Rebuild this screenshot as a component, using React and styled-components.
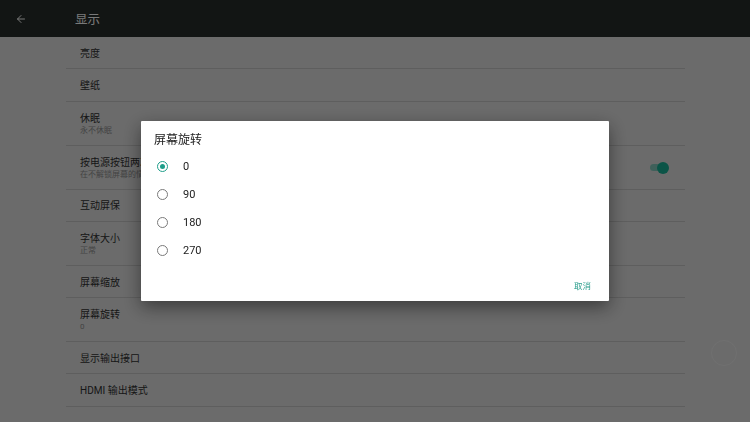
import React from 'react'
import styled, { createGlobalStyle } from 'styled-components';
import { ArrowLeft } from 'lucide-react';

const GlobalStyle = createGlobalStyle`
  html, body {
    margin: 0;
    padding: 0;
    background: #d6d6d6;
    font-family: Roboto, "Noto Sans CJK SC", sans-serif;
  }
`;

const Screen = styled.div`
  width: 750px;
  height: 422px;
  overflow: hidden;
  background: #d6d6d6;
`;

const Header = styled.div`
  height: 37px;
  display: flex;
  align-items: center;
  background: #242a28;
  color: #f2f2f2;
  padding-left: 15px;
  box-sizing: border-box;
`;

const HeaderTitle = styled.span`
  margin-left: 48px;
  font-size: 12.5px;
  font-family: "Noto Sans CJK SC", sans-serif;
`;

const List = styled.div`
  margin: 0 65px 0 66px;
`;

const Row = styled.div`
  height: ${p => (p.$sub ? 42 : 30.3)}px;
  border-bottom: 1px solid #bdbdbd;
  display: flex;
  align-items: center;
  justify-content: space-between;
  padding: 1px 17px 0 14px;
`;

const Texts = styled.div`
  display: flex;
  flex-direction: column;
  gap: 1px;
  font-family: Roboto, "Noto Sans CJK SC", sans-serif;
`;

const Title = styled.span`
  font-size: 10px;
  line-height: 13px;
  color: #2e2e2e;
`;

const Sub = styled.span`
  font-size: 8px;
  line-height: 10px;
  color: #888888;
`;

const Switch = styled.div`
  position: relative;
  width: 18px;
  height: 7px;
  border-radius: 4px;
  background: rgba(23, 168, 142, 0.45);
  &::after {
    content: '';
    position: absolute;
    right: -1px;
    top: -2.5px;
    width: 12px;
    height: 12px;
    border-radius: 50%;
    background: #17a88e;
  }
`;

const Overlay = styled.div`
  position: fixed;
  inset: 0;
  background: rgba(0, 0, 0, 0.5);
  display: flex;
  align-items: center;
  justify-content: center;
`;

const Dialog = styled.div`
  width: 468px;
  height: 180px;
  box-sizing: border-box;
  background: #ffffff;
  border-radius: 1px;
  box-shadow: 0 6px 18px rgba(0, 0, 0, 0.45);
  padding: 11px 18px 6px 13px;
  display: flex;
  flex-direction: column;
  font-family: Roboto, "Noto Sans CJK SC", sans-serif;
`;

const DialogTitle = styled.div`
  font-size: 12px;
  line-height: 16px;
  color: #212121;
  margin-bottom: 4px;
`;

const Option = styled.div`
  height: 28px;
  display: flex;
  align-items: center;
  padding-left: 3px;
`;

const Radio = styled.span`
  width: 11px;
  height: 11px;
  box-sizing: border-box;
  border-radius: 50%;
  border: 1.5px solid ${p => (p.$on ? '#1e9e8a' : '#7a7a7a')};
  display: flex;
  align-items: center;
  justify-content: center;
  &::after {
    content: '';
    width: 5px;
    height: 5px;
    border-radius: 50%;
    background: ${p => (p.$on ? '#1e9e8a' : 'transparent')};
  }
`;

const OptionLabel = styled.span`
  margin-left: 15px;
  font-size: 11px;
  color: #212121;
`;

const Actions = styled.div`
  margin-top: auto;
  height: 20px;
  display: flex;
  align-items: center;
  justify-content: flex-end;
`;

const TextButton = styled.span`
  font-size: 8.5px;
  color: #2a9d8c;
  font-family: "Noto Sans CJK SC", sans-serif;
`;

const FloatCircle = styled.div`
  position: fixed;
  left: 711px;
  top: 340px;
  width: 24px;
  height: 24px;
  border-radius: 50%;
  border: 1px solid rgba(255, 255, 255, 0.035);
`;

const items = [
  { title: '亮度' },
  { title: '壁纸' },
  { title: '休眠', sub: '永不休眠' },
  { title: '按电源按钮两次即可打开相机', sub: '在不解锁屏幕的情况下快速打开相机', toggle: true },
  { title: '互动屏保' },
  { title: '字体大小', sub: '正常' },
  { title: '屏幕缩放' },
  { title: '屏幕旋转', sub: '0' },
  { title: '显示输出接口' },
  { title: 'HDMI 输出模式' },
];

const options = ['0', '90', '180', '270'];

const App = () => {
  return (
    <Screen>
      <GlobalStyle />
      <Header>
        <ArrowLeft size={12} strokeWidth={2} color="#f2f2f2" />
        <HeaderTitle>显示</HeaderTitle>
      </Header>
      <List>
        {items.map(item => (
          <Row key={item.title} $sub={!!item.sub}>
            <Texts>
              <Title>{item.title}</Title>
              {item.sub && <Sub>{item.sub}</Sub>}
            </Texts>
            {item.toggle && <Switch />}
          </Row>
        ))}
      </List>
      <Overlay>
        <Dialog>
          <DialogTitle>屏幕旋转</DialogTitle>
          {options.map(o => (
            <Option key={o}>
              <Radio $on={o === '0'} />
              <OptionLabel>{o}</OptionLabel>
            </Option>
          ))}
          <Actions>
            <TextButton>取消</TextButton>
          </Actions>
        </Dialog>
      </Overlay>
      <FloatCircle />
    </Screen>
  )
}

export default App
